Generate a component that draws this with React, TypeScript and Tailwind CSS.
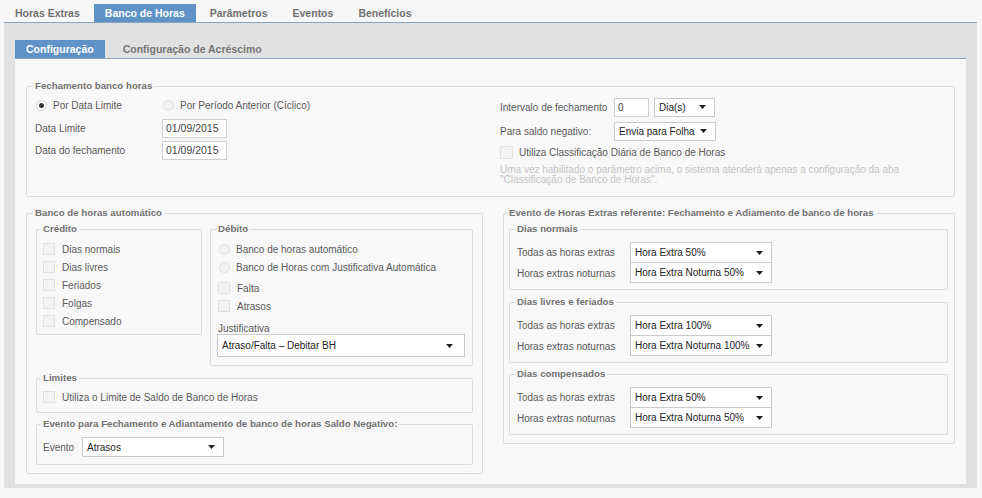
import type { ReactNode } from "react";

const topTabs = ["Horas Extras", "Banco de Horas", "Parâmetros", "Eventos", "Benefícios"];

function Arrow() {
  return (
    <svg width="7" height="4" viewBox="0 0 7 4" className="shrink-0">
      <path d="M0 0h7L3.5 4z" fill="#222" />
    </svg>
  );
}

function Select({ value, className = "" }: { value: string; className?: string }) {
  return (
    <div
      className={`flex items-center justify-between border border-[#cacaca] bg-white pl-[4px] pr-[8px] text-[10px] text-[#222] ${className}`}
    >
      <span>{value}</span>
      <Arrow />
    </div>
  );
}

function Check({ label, className = "" }: { label: string; className?: string }) {
  return (
    <div className={`flex h-[18px] items-center ${className}`}>
      <span className="h-[12px] w-[12px] border border-[#e0e0e0] bg-[#f3f3f3]" />
      <span className="ml-[7px]">{label}</span>
    </div>
  );
}

function Radio({ label, checked = false }: { label: string; checked?: boolean }) {
  return (
    <div className="flex h-[18px] items-center">
      <span
        className={`flex h-[11px] w-[11px] items-center justify-center rounded-full border ${
          checked ? "border-[#d0d0d0] bg-white" : "border-[#e0e0e0] bg-[#f3f3f3]"
        }`}
      >
        {checked && <span className="h-[5px] w-[5px] rounded-full bg-[#333]" />}
      </span>
      <span className="ml-[6px]">{label}</span>
    </div>
  );
}

function Box({
  legend,
  legendMl = "ml-[6px]",
  className = "",
  children,
}: {
  legend: string;
  legendMl?: string;
  className?: string;
  children: ReactNode;
}) {
  return (
    <fieldset className={`rounded-[2px] border border-[#dcdcdc] ${className}`}>
      <legend className={`${legendMl} px-[2px] text-[9.7px] leading-[12px] font-bold text-[#727272]`}>
        {legend}
      </legend>
      {children}
    </fieldset>
  );
}

function ExtraGroup({ legend, first, second, className = "" }: { legend: string; first: string; second: string; className?: string }) {
  return (
    <Box legend={legend} legendMl="ml-[5px]" className={`h-[67px] w-[439px] ${className}`}>
      <div className="pl-[7px] pt-[7px]">
        <div className="flex">
          <div className="w-[113px]">
            <div className="flex h-[21px] items-center">Todas as horas extras</div>
            <div className="flex h-[20px] items-center">Horas extras noturnas</div>
          </div>
          <div className="w-[142px]">
            <Select value={first} className="h-[21px]" />
            <Select value={second} className="-mt-px h-[21px]" />
          </div>
        </div>
      </div>
    </Box>
  );
}

export default function App() {
  return (
    <div className="h-[498px] w-[982px] overflow-hidden bg-[#f7f7f7] font-['Liberation_Sans',Arial,sans-serif] text-[10px] text-[#5a5a5a]">
      <div className="flex gap-[3px] pl-[4px] pt-[4px]">
        {topTabs.map((t) => (
          <div
            key={t}
            className={`h-[18px] px-[11px] text-[10.5px] leading-[18px] font-bold ${
              t === "Banco de Horas" ? "bg-[#5f93c8] text-white" : "text-[#707070]"
            }`}
          >
            {t}
          </div>
        ))}
      </div>

      <div className="ml-[4px] h-[466px] w-[973px] border-t border-[#8aa3bd] bg-[#e1e1e1] pl-[11px] pr-[11px] pt-[17px]">
        <div className="flex gap-[7px]">
          <div className="h-[18px] bg-[#5f93c8] px-[11px] text-[10.5px] leading-[18px] font-bold text-white">
            Configuração
          </div>
          <div className="h-[18px] px-[11px] text-[10.5px] leading-[18px] font-bold text-[#777]">
            Configuração de Acréscimo
          </div>
        </div>

        <div className="h-[426px] w-[951px] border-t border-[#8aa3bd] bg-[#f8f8f8] px-[11px] pt-[21px]">
          <Box legend="Fechamento banco horas" className="h-[117px] w-[929px]">
            <div className="flex pl-[8px]">
              <div className="w-[465px] pt-[3px]">
                <div className="flex h-[20px] items-center pl-[1px]">
                  <div className="w-[127px]">
                    <Radio label="Por Data Limite" checked />
                  </div>
                  <Radio label="Por Período Anterior (Cíclico)" />
                </div>
                <div className="mt-[4px] flex h-[19px] items-center">
                  <span className="w-[127px]">Data Limite</span>
                  <div className="flex h-[19px] w-[65px] items-center border border-[#cfcfcf] bg-white px-[3px] text-[10.5px] text-[#444]">
                    01/09/2015
                  </div>
                </div>
                <div className="mt-[3px] flex h-[19px] items-center">
                  <span className="w-[127px]">Data do fechamento</span>
                  <div className="flex h-[19px] w-[65px] items-center border border-[#cfcfcf] bg-white px-[3px] text-[10.5px] text-[#444]">
                    01/09/2015
                  </div>
                </div>
              </div>

              <div className="pt-[6px]">
                <div className="flex h-[18px] items-center">
                  <span className="w-[114px]">Intervalo de fechamento</span>
                  <div className="flex h-[19px] w-[35px] items-center border border-[#cfcfcf] bg-white px-[3px] text-[#444]">
                    0
                  </div>
                  <Select value="Dia(s)" className="ml-[5px] h-[19px] w-[61px]" />
                </div>
                <div className="mt-[6px] flex h-[18px] items-center">
                  <span className="w-[114px]">Para saldo negativo:</span>
                  <Select value="Envia para Folha" className="h-[19px] w-[102px]" />
                </div>
                <div className="mt-[5px] flex h-[14px] items-center">
                  <span className="h-[13px] w-[13px] border border-[#e3e3e3] bg-[#f4f4f4]" />
                  <span className="ml-[6px]">Utiliza Classificação Diária de Banco de Horas</span>
                </div>
                <p className="mt-[6px] leading-[10px] text-[#c4c4c4]">
                  Uma vez habilitado o parâmetro acima, o sistema atenderá apenas a configuração da aba
                  <br />
                  "Classificação de Banco de Horas".
                </p>
              </div>
            </div>
          </Box>

          <div className="mt-[10px] flex items-start gap-[20px]">
            <Box legend="Banco de horas automático" className="h-[267px] w-[457px]">
              <div className="px-[9px] pt-[4px]">
                <div className="flex items-start gap-[8px]">
                  <Box legend="Crédito" legendMl="ml-[4px]" className="h-[112px] w-[166px]">
                    <div className="pl-[6px] pt-[5px]">
                      <Check label="Dias normais" />
                      <Check label="Dias livres" />
                      <Check label="Feriados" />
                      <Check label="Folgas" />
                      <Check label="Compensado" />
                    </div>
                  </Box>
                  <Box legend="Débito" legendMl="ml-[5px]" className="h-[143px] w-[263px]">
                    <div className="pl-[6px] pt-[5px]">
                      <div className="pl-[2px]">
                        <Radio label="Banco de horas automático" />
                        <Radio label="Banco de Horas com Justificativa Automática" />
                      </div>
                      <div className="mt-[3px] pl-[1px]">
                        <Check label="Falta" />
                        <Check label="Atrasos" />
                      </div>
                      <div className="mt-[8px] h-[11px] pl-[1px] leading-[11px]">Justificativa</div>
                      <Select value="Atraso/Falta – Debitar BH" className="h-[23px] w-[248px] pr-[11px]" />
                    </div>
                  </Box>
                </div>

                <Box legend="Limites" legendMl="ml-[4px]" className="mt-[6px] h-[41px] w-[437px]">
                  <div className="pl-[6px] pt-[4px]">
                    <Check label="Utiliza o Limite de Saldo de Banco de Horas" />
                  </div>
                </Box>

                <Box
                  legend="Evento para Fechamento e Adiantamento de banco de horas Saldo Negativo:"
                  legendMl="ml-[4px]"
                  className="mt-[5px] h-[47px] w-[437px]"
                >
                  <div className="flex items-center pl-[6px] pt-[7px]">
                    <span className="w-[39px]">Evento</span>
                    <Select value="Atrasos" className="h-[20px] w-[142px]" />
                  </div>
                </Box>
              </div>
            </Box>

            <Box
              legend="Evento de Horas Extras referente: Fechamento e Adiamento de banco de horas"
              legendMl="ml-[3px]"
              className="h-[237px] w-[452px]"
            >
              <div className="pl-[5px] pt-[4px]">
                <ExtraGroup legend="Dias normais" first="Hora Extra 50%" second="Hora Extra Noturna 50%" />
                <ExtraGroup
                  legend="Dias livres e feriados"
                  first="Hora Extra 100%"
                  second="Hora Extra Noturna 100%"
                  className="mt-[6px]"
                />
                <ExtraGroup
                  legend="Dias compensados"
                  first="Hora Extra 50%"
                  second="Hora Extra Noturna 50%"
                  className="mt-[5px]"
                />
              </div>
            </Box>
          </div>
        </div>
      </div>
    </div>
  );
}
